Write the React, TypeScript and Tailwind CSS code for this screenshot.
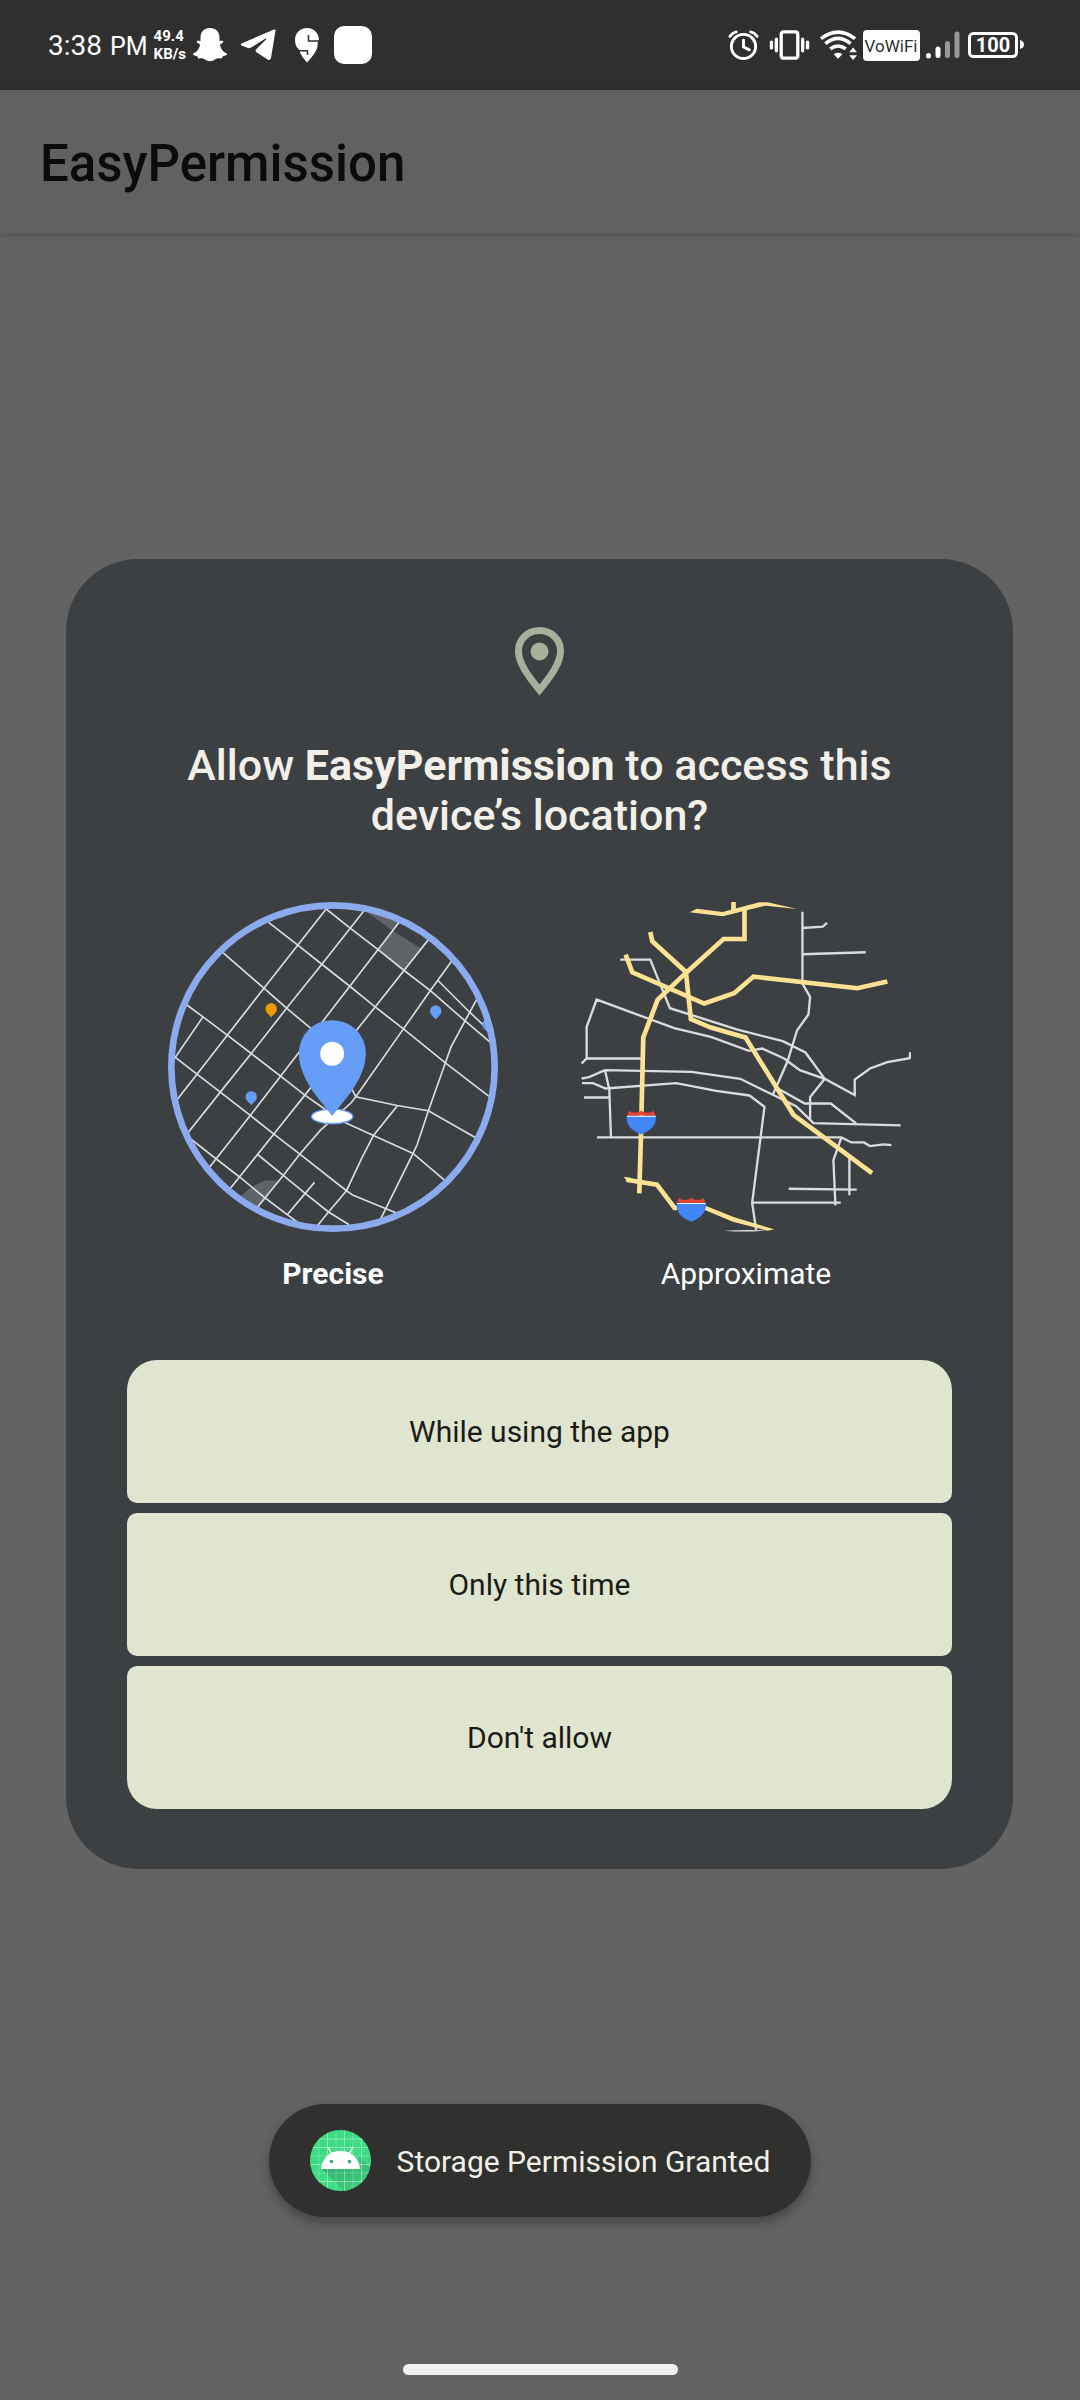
import React from "react";

function StatusBar() {
  return (
    <div className="flex h-[90px] items-center justify-between bg-[#2f2f2f] pl-12 pr-14 text-white">
      <div className="flex items-center">
        <div className="flex items-baseline gap-2 pt-0.5 leading-8">
          <span className="text-[28px]">3:38</span>
          <span className="text-[25px]">PM</span>
        </div>
        <div className="ml-1.5 flex flex-col text-[15px] font-bold leading-[18px]">
          <span>49.4</span>
          <span>KB/s</span>
        </div>
        <svg className="ml-1.5 h-9 w-9" viewBox="0 0 36 36" fill="currentColor" aria-label="Snapchat">
          <path d="M18 1C12 1 8.500 5 8.500 10.500V14C7.500 14.200 6 13.500 5 14C4 15 6 16.500 8 17.500C8 21 4.500 25.500 1 26.500C.5 28.500 4 29 5.500 29.500C6 31 6 31.500 7 31.500C9 31 11 31 13 32.500C16 34.700 20 34.700 23 32.500C25 31 27 31 29 31.500C30 31.500 30 31 30.500 29.500C32 29 35.500 28.500 35 26.500C31.500 25.500 28 21 28 17.500C30 16.500 32 15 31 14C30 13.500 28.500 14.200 27.500 14V10.500C27.500 5 24 1 18 1Z" />
        </svg>
        <svg className="ml-3 h-9 w-9" viewBox="0 0 36 36" fill="currentColor" aria-label="Telegram">
          <path d="M35.500 3.500Q36 2 34 2.500L1.500 16.500Q0 17.500 1.500 18.500L8 21Q10 21.500 12 20L25.500 11.500Q27 11 26 12.500L16 22.500Q15 24 16.500 25.200L27.500 32.500Q30 34 31 31Z" />
        </svg>
        <svg className="ml-4 h-9 w-9" viewBox="-3 -1 36 36" aria-label="Swiggy">
          <path d="M12 0C5 0 0 5 0 12C0 15.500 1 19 4 22L5 24.500C7 28.500 9 31 12 34.500C17 29 22.700 23 22.700 16V14.500L24 11C23 4 18.500 0 12 0Z" fill="currentColor" />
          <path d="M13.500 7V13H24.500M0 19.500L4 22.700H12.500V27" fill="none" stroke="#2f2f2f" strokeWidth="1.500" />
          <path d="M-1 17L4.500 22.500V24.500L2 24Z" fill="#2f2f2f" />
        </svg>
        <div className="ml-1.5 h-[38px] w-[38px] rounded-[10px] bg-white" />
      </div>
      <StatusIcons />
    </div>
  );
}

function StatusIcons() {
  return (
    <div className="flex items-center">
      <svg className="h-8 w-[31px]" viewBox="0 0 32 32" fill="none" stroke="currentColor" strokeWidth="3" strokeLinecap="round" aria-label="Alarm">
        <circle cx="16" cy="17.500" r="12.500" />
        <path d="M16 11V18L22 21" />
        <path d="M2 7Q4.500 3.500 8.500 2.500M30 7Q27.500 3.500 23.500 2.500" />
      </svg>
      <svg className="ml-2.5 h-8 w-[41px]" viewBox="0 0 42 32" fill="none" stroke="currentColor" strokeWidth="3.400" strokeLinecap="round" aria-label="Vibrate">
        <rect x="12.500" y="2.500" width="17" height="27" rx="2.500" />
        <path d="M7.500 10V22M34.500 10V22M2.500 13V19M39.500 13V19" />
      </svg>
      <svg className="ml-2.5 h-8 w-[37px]" viewBox="0 0 38 32" fill="none" stroke="currentColor" strokeWidth="3.600" aria-label="Wi-Fi">
        <path d="M1 9.500Q18.500-4 36 9.500M5.500 14.500Q18.500 4 31.500 14.500M10.500 20Q18.500 14 26.500 20" />
        <path d="M14 25.500Q18.500 22.500 23 25.500L18.500 30Z M30 23.500L34 18.500L38 23.500Z M30 26.500H38L34 31.500Z" fill="currentColor" stroke="none" />
      </svg>
      <svg className="ml-1.5 h-8 w-[57px]" viewBox="0 0 57 32" aria-label="VoWiFi">
        <rect width="57" height="31" rx="4" y="1" fill="currentColor" />
        <text x="28" y="23" textAnchor="middle" fill="#2f2f2f" fontSize="17" fontFamily="Roboto">VoWiFi</text>
      </svg>
      <svg className="ml-1.5 h-8 w-[34px]" viewBox="0 0 34 32" stroke="currentColor" strokeWidth="5" strokeLinecap="round" aria-label="Signal">
        <path d="M2.500 26.500V27M12 20V26.500" />
        <path d="M21.500 14.500V26.500M31 5V26.500" stroke="#979797" />
      </svg>
      <svg className="ml-2 h-8 w-14" viewBox="0 0 56 32" fill="none" stroke="currentColor" strokeWidth="3" aria-label="Battery">
        <rect x="1.500" y="4.500" width="47" height="23" rx="4" />
        <path d="M52 11V20Q56 19 56 15.500Q56 12 52 11Z" fill="currentColor" stroke="none" />
        <text x="25" y="23" textAnchor="middle" fill="currentColor" stroke="none" fontSize="20" fontWeight="700" fontFamily="Roboto">100</text>
      </svg>
    </div>
  );
}

function SmallPin({ x, y, color }: { x: number; y: number; color: string }) {
  return (
    <g transform={`translate(${x} ${y})`}>
      <path d="M0-17C-10-17-17-10-17 0C-17 11-9 14 0 25C9 14 17 11 17 0C17-10 10-17 0-17Z" fill={color} />
    </g>
  );
}

function PreciseMap() {
  return (
    <svg className="h-[330px] w-[330px]" viewBox="52 37 991 991" fill="none" aria-hidden="true">
      <defs>
        <clipPath id="preciseClip">
          <circle cx="547.500" cy="532.500" r="480" />
        </clipPath>
      </defs>
      <g clipPath="url(#preciseClip)">
        <path d="M640 60L745 95L728 124L810 176L760 242L683 180L728 124Z" fill="#5f6368" />
        <path d="M272 920Q300 890 344 873H384L322 952Z" fill="#5f6368" />
        <g stroke="#dadce0" strokeWidth="5">
          <path d="M527 58L340 296L230 437L139 554L75 636" />
          <path d="M640 64L514 224L408 356L302 492L209 608L112 730" />
          <path d="M746 98L598 290L390 560L299 678L176 834" />
          <path d="M834 150L674 352L463 617L370 734L240 896" />
          <path d="M904 214L840 303L759 418L616 622L602 640L510 722L448 794L398 858L322 952" />
          <path d="M157 382L72 506" />
          <path d="M980 328L944 394L902 472L885 520L834 664L800 766L788 792L690 990" />
          <path d="M740 650L669 738L634 806L588 904L534 968L500 1010" />
          <path d="M492 879L464 912L410 976" />
          <path d="M527 58L600 116L683 180L760 242L840 303L944 394L1022 460" />
          <path d="M862 272L958 368L1020 426" />
          <path d="M354 98L440 165L514 224L598 290L674 352L759 418L885 520L1018 622" />
          <path d="M216 188L340 296L408 356L500 432" />
          <path d="M106 344L157 382L230 437L302 492L390 560L463 617L530 664" />
          <path d="M72 502L139 554L209 608L299 678L370 734L448 794L588 904L608 918L740 972" />
          <path d="M122 750L196 808L266 862L344 926L410 976L440 998" />
          <path d="M322 796L398 858L464 912L534 968L596 1006" />
          <path d="M600 590L616 622L740 648L834 664L976 745" />
          <path d="M580 698L669 738L788 792L884 874" />
        </g>
        <SmallPin x={362} y={358} color="#f29900" />
        <SmallPin x={302} y={622} color="#669df6" />
        <SmallPin x={856} y={365} color="#669df6" />
        <SmallPin x={1013} y={405} color="#669df6" />
        <ellipse cx="545" cy="681" rx="62" ry="22" fill="#fff" stroke="#669df6" strokeWidth="4" />
        <path d="M545 392C490 392 445 434 445 493C445 532 464 570 487 606L545 680L603 606C627 570 646 532 646 493C646 434 600 392 545 392Z" fill="#669df6" />
        <circle cx="545" cy="493" r="36" fill="#fff" />
      </g>
      <circle cx="547.500" cy="532.500" r="485.500" stroke="#8caaee" strokeWidth="20" />
    </svg>
  );
}

function Shield({ x, y }: { x: number; y: number }) {
  return (
    <g transform={`translate(${x} ${y})`}>
      <path d="M-44 15C-46 45-28 60 0 71C28 60 46 45 44 15Z" fill="#4285f4" />
      <path d="M-42 14L-37 0C-30 8-10 8 0 0C10 8 30 8 37 0L43 14Z" fill="#ea4335" />
      <path d="M-43 15H43V18H-43Z" fill="#fff" />
    </g>
  );
}

function ApproximateMap() {
  return (
    <svg className="h-[330px] w-[330px]" viewBox="30 37 991 991" fill="none" aria-hidden="true">
      <g stroke="#dadce0" strokeWidth="7">
        <path d="M695 66V282L718 322L713 375L679 422L650 516L606 616" />
        <path d="M695 115L756 111L769 100M695 194L885 188" />
        <path d="M148 210H238L297 356L500 420L636 455L704 489L762 568L852 617V570L898 537L950 518L1017 506L1019 488" />
        <path d="M32 522L47 506V412L77 330L310 416L420 442L534 484L574 477L640 507L687 542L762 568L718 623V690" />
        <path d="M47 507H214" />
        <path d="M32 567L54 563L102 542L362 547L508 568L606 616L676 650L728 701L990 708" />
        <path d="M33 581H66L104 597L316 581L436 604L536 618L581 652L544 940L556 1022" />
        <path d="M39 624H115M102 542L115 600L120 744" />
        <path d="M620 596L702 642H780L856 702" />
        <path d="M78 744H812L842 759H880L897 770L940 765L962 767" />
        <path d="M812 744L788 812L794 948M836 800V918" />
        <path d="M654 898L858 901M544 940H810" />
      </g>
      <path d="M460 1024Q520 1020 590 1023Q520 1030 460 1024Z" fill="#dadce0" />
      <g stroke="#fde293" strokeWidth="14">
        <path d="M488 37V66M521 56V148H458L345 250L260 331L217 444L210 740L205 912" />
        <path d="M238 127L244 155L345 247L360 389L420 414L524 444L668 676L904 851" />
        <path d="M164 195L184 248L400 342L490 311L548 261L860 296L950 276" />
        <path d="M166 871L258 886L311 956H318" />
      </g>
      <path d="M158 862L182 866L172 879Z" fill="#fde293" />
      <path d="M356 68L378 57L455 67L565 38L590 38L680 58L585 48L456 80Z" fill="#fde293" />
      <path d="M404 949L490 984L610 1020L590 1024L486 997L402 962Z" fill="#fde293" />
      <Shield x={211} y={664} />
      <Shield x={361} y={926} />
    </svg>
  );
}

function PermissionDialog() {
  return (
    <section
      role="dialog"
      aria-labelledby="dialog-title"
      className="ml-[66px] mr-[67px] flex flex-col items-center rounded-[72px] bg-[#3c4043] px-[61px] pb-[60px] pt-[68px]"
    >
      <svg className="h-[69px] w-[49px]" viewBox="0 0 49 69" fill="none" aria-hidden="true">
        <path d="M24.500 3.500C12.500 3.500 3.500 12.500 3.500 24C3.500 36 13 49 24.500 63C36 49 45.500 36 45.500 24C45.500 12.500 36.500 3.500 24.500 3.500Z" stroke="#a8af9a" strokeWidth="7" />
        <circle cx="24.500" cy="24.500" r="9" fill="#a8af9a" />
      </svg>
      <h2 id="dialog-title" className="mt-11 text-center text-[43px] font-medium leading-[50px] text-[#f2efe9]">
        Allow <strong className="font-bold">EasyPermission</strong> to access this
        <br />
        device’s location?
      </h2>
      <div className="mt-[62px] flex w-full justify-center gap-[83px]">
        <button type="button" aria-pressed="true" className="flex flex-col items-center">
          <PreciseMap />
          <span className="mt-6 text-[30px] font-bold leading-9 text-white">Precise</span>
        </button>
        <button type="button" aria-pressed="false" className="flex flex-col items-center">
          <ApproximateMap />
          <span className="mt-6 text-[30px] leading-9 text-white">Approximate</span>
        </button>
      </div>
      <div className="mt-[68px] flex w-full flex-col gap-2.5 text-[30px] leading-9 text-[#1b1c18]">
        <button type="button" className="h-[143px] rounded-[10px] rounded-t-[30px] bg-[#e0e5cf]">While using the app</button>
        <button type="button" className="h-[143px] rounded-[10px] bg-[#e0e5cf]">Only this time</button>
        <button type="button" className="h-[143px] rounded-[10px] rounded-b-[30px] bg-[#e0e5cf]">Don't allow</button>
      </div>
    </section>
  );
}

function AndroidLogo() {
  return (
    <svg className="h-[61px] w-[61px]" viewBox="0 0 61 61" aria-hidden="true">
      <defs>
        <clipPath id="androidClip">
          <circle cx="30.500" cy="30.500" r="30.500" />
        </clipPath>
        <linearGradient id="androidShade" x1="0" y1="0" x2="1" y2="1">
          <stop offset="0" stopColor="#2fa568" />
          <stop offset="1" stopColor="#3ddc84" />
        </linearGradient>
      </defs>
      <g clipPath="url(#androidClip)">
        <rect width="61" height="61" fill="#3ddc84" />
        <path d="M12 39L36 63H66V43L49 27L50 39Z" fill="url(#androidShade)" />
        <path d="M9 0V61M26 0V61M43 0V61M0 26H61M0 43H61" stroke="#fff" strokeOpacity=".22" strokeWidth="1" />
        <path d="M17.500 0V61M34.500 0V61M51.500 0V61M0 9H61M0 17.500H61M0 34.500H61M0 51.500H61" stroke="#fff" strokeOpacity=".4" strokeWidth="1" />
      </g>
      <path d="M11 39C12 30 17 25 22 22.500Q30.500 19 39 22.500C44 25 49 30 50 39Z" fill="#fff" />
      <path d="M21.500 23.500L18 17M39.500 23.500L43 17" stroke="#fff" strokeWidth="1.500" />
      <circle cx="21.500" cy="31.500" r="1.700" fill="#2fa568" />
      <circle cx="39.500" cy="31.500" r="1.700" fill="#2fa568" />
    </svg>
  );
}

export default function App() {
  return (
    <div className="flex min-h-screen flex-col bg-[#636363] font-[Roboto,sans-serif]">
      <StatusBar />
      <header className="flex h-[143px] items-center bg-[#616161] px-10 pt-1 shadow-[0_2px_6px_rgba(0,0,0,0.15)]">
        <h1 className="text-[51px] font-medium leading-[60px] text-[#0b0b0b]">EasyPermission</h1>
      </header>
      <main className="flex flex-1 flex-col pt-[326px]">
        <PermissionDialog />
        <div role="status" className="mx-auto mt-[235px] flex h-[113px] items-center gap-[26px] rounded-[57px] bg-[#30302e] px-[41px] shadow-[0_6px_12px_rgba(0,0,0,0.3)]">
          <AndroidLogo />
          <span className="pt-0.5 text-[30px] leading-9 text-[#f2efe9]">Storage Permission Granted</span>
        </div>
      </main>
      <footer className="flex justify-center pb-[25px]">
        <div className="h-[11px] w-[275px] rounded-full bg-[#f2f2f2]" />
      </footer>
    </div>
  );
}
